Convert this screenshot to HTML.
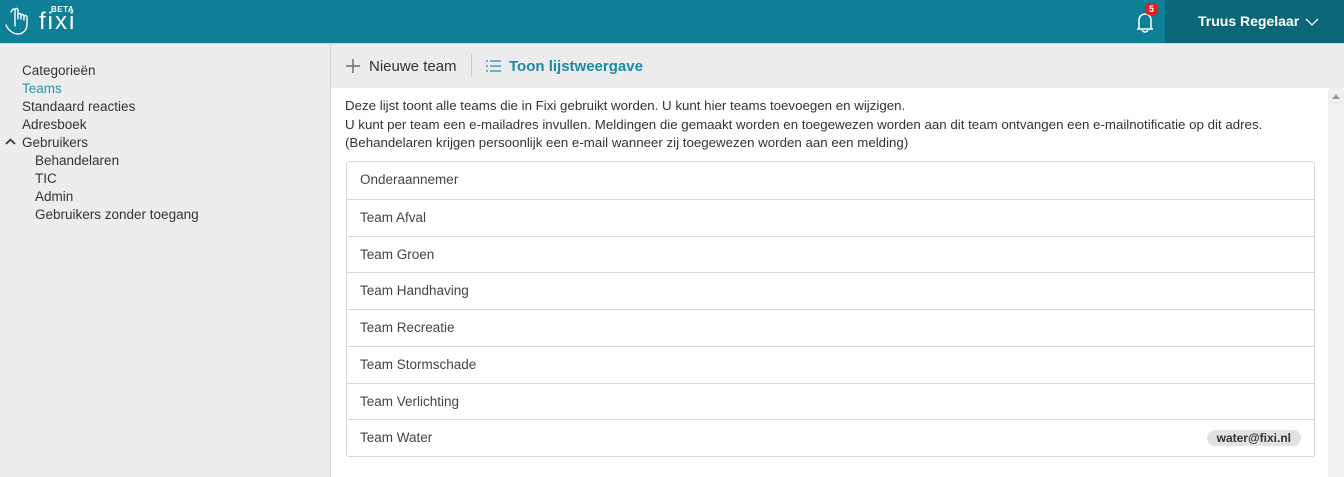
<!DOCTYPE html>
<html><head><meta charset="utf-8"><style>
*{margin:0;padding:0;box-sizing:border-box}
body{width:1344px;height:477px;overflow:hidden;font-family:"Liberation Sans",sans-serif;color:#333;background:#fff;position:relative}
.hdr{position:absolute;left:0;top:0;width:1344px;height:43px;background:#0e7f96}
.user{position:absolute;left:1165px;top:0;width:179px;height:43px;background:#0b6677;color:#fff;font-size:14px;font-weight:bold;line-height:42px;padding-left:33px}
.line{position:absolute;top:43px;left:0;width:1344px;height:1px;background:#cfd8da}
.side{position:absolute;left:0;top:44px;width:331px;height:433px;background:#ededed;border-right:1px solid #d6d6d6;font-size:13.5px}
.side div{position:absolute;line-height:18px}
.tb{position:absolute;left:331px;top:44px;width:1013px;height:44px;background:#ececec}
.main{position:absolute;left:331px;top:88px;width:997px;height:389px;background:#fff}
.sb{position:absolute;left:1328px;top:88px;width:16px;height:389px;background:#f0f0f0}
.desc{position:absolute;left:345px;top:97px;font-size:13.3px;line-height:18.5px;color:#333}
.list{position:absolute;left:346px;top:161px;width:969px;border:1px solid #d8d8d8;border-radius:3px}
.row{height:36.75px;border-top:1px solid #d8d8d8;font-size:13.5px;line-height:36px;padding-left:13px;color:#444;position:relative}
.row:first-child{border-top:none}
.pill{position:absolute;right:13px;top:10px;height:16px;line-height:16px;background:#e2e2e2;border-radius:8px;font-size:12px;font-weight:bold;padding:0 10px;color:#333}
</style></head><body>
<div class="hdr">
<svg style="position:absolute;left:3px;top:6px" width="30" height="30" viewBox="0 0 30 30" fill="none" stroke="#fff" stroke-width="1.4" stroke-linecap="round"><path d="M12 20V4a1.5 1.5 0 0 1 3 0v9M15 9a1.5 1.5 0 0 1 3 0v4M18 10a1.5 1.5 0 0 1 3 0v4M21 11a1.5 1.5 0 0 1 3 0v7c0 6-4 10-9 10s-10-4-12-9"/><path d="M8 6c1-2 2-3 3-3"/></svg>
<div style="position:absolute;left:39px;top:11px;color:#fff;font-size:24px;line-height:22px;letter-spacing:2px">fixi</div>
<div style="position:absolute;left:51px;top:5px;color:#fff;font-size:8px;font-weight:bold;letter-spacing:0.5px">BETA</div>
<svg style="position:absolute;left:1133px;top:9px" width="24" height="26" viewBox="0 0 24 26" fill="none" stroke="#fff" stroke-width="1.5"><path d="M4 20h16M6 20V11a6 6 0 0 1 12 0v9M9 20a3 3 0 0 0 6 0"/></svg>
<div style="position:absolute;left:1145px;top:3px;width:13px;height:12px;background:#e02020;border-radius:4px;color:#fff;font-size:9px;font-weight:bold;text-align:center;line-height:12px">5</div>
</div>
<div class="user">Truus Regelaar <svg style="vertical-align:middle;margin-left:2px" width="14" height="8" viewBox="0 0 14 8" fill="none" stroke="#fff" stroke-width="1.3"><path d="M1 1l6 6 6-6"/></svg></div>
<div class="line"></div>
<div class="side">
<div style="left:22px;top:18px">Categorieën</div>
<div style="left:22px;top:36px;color:#2b93ad">Teams</div>
<div style="left:22px;top:54px">Standaard reacties</div>
<div style="left:22px;top:72px">Adresboek</div>
<svg style="position:absolute;left:5px;top:94px" width="11" height="8" viewBox="0 0 11 8" fill="none" stroke="#333" stroke-width="1.6"><path d="M1 6l4.5-4.5L10 6"/></svg>
<div style="left:22px;top:90px">Gebruikers</div>
<div style="left:35px;top:108px">Behandelaren</div>
<div style="left:35px;top:126px">TIC</div>
<div style="left:35px;top:144px">Admin</div>
<div style="left:35px;top:162px">Gebruikers zonder toegang</div>
</div>
<div class="tb">
<svg style="position:absolute;left:15px;top:15px" width="14" height="14" viewBox="0 0 14 14" stroke="#555" stroke-width="1.2"><path d="M7 0v14M0 7h14"/></svg>
<div style="position:absolute;left:38px;top:14px;font-size:15px;color:#333">Nieuwe team</div>
<div style="position:absolute;left:140px;top:10px;width:1px;height:23px;background:#ccc"></div>
<svg style="position:absolute;left:155px;top:16px" width="15" height="12" viewBox="0 0 15 12" stroke="#1d8aa3" stroke-width="1.3"><path d="M0 1h2M4 1h11M0 6h2M4 6h11M0 11h2M4 11h11"/></svg>
<div style="position:absolute;left:178px;top:14px;font-size:15px;color:#1d8aa3;font-weight:bold">Toon lijstweergave</div>
</div>
<div class="main"></div>
<div class="sb"><svg style="position:absolute;left:4px;top:6px" width="8" height="5"><path d="M0 5L4 0 8 5z" fill="#999"/></svg></div>
<div class="desc">Deze lijst toont alle teams die in Fixi gebruikt worden. U kunt hier teams toevoegen en wijzigen.<br>U kunt per team een e-mailadres invullen. Meldingen die gemaakt worden en toegewezen worden aan dit team ontvangen een e-mailnotificatie op dit adres.<br>(Behandelaren krijgen persoonlijk een e-mail wanneer zij toegewezen worden aan een melding)</div>
<div class="list">
<div class="row">Onderaannemer</div>
<div class="row">Team Afval</div>
<div class="row">Team Groen</div>
<div class="row">Team Handhaving</div>
<div class="row">Team Recreatie</div>
<div class="row">Team Stormschade</div>
<div class="row">Team Verlichting</div>
<div class="row">Team Water<span class="pill">water@fixi.nl</span></div>
</div>
</body></html>
